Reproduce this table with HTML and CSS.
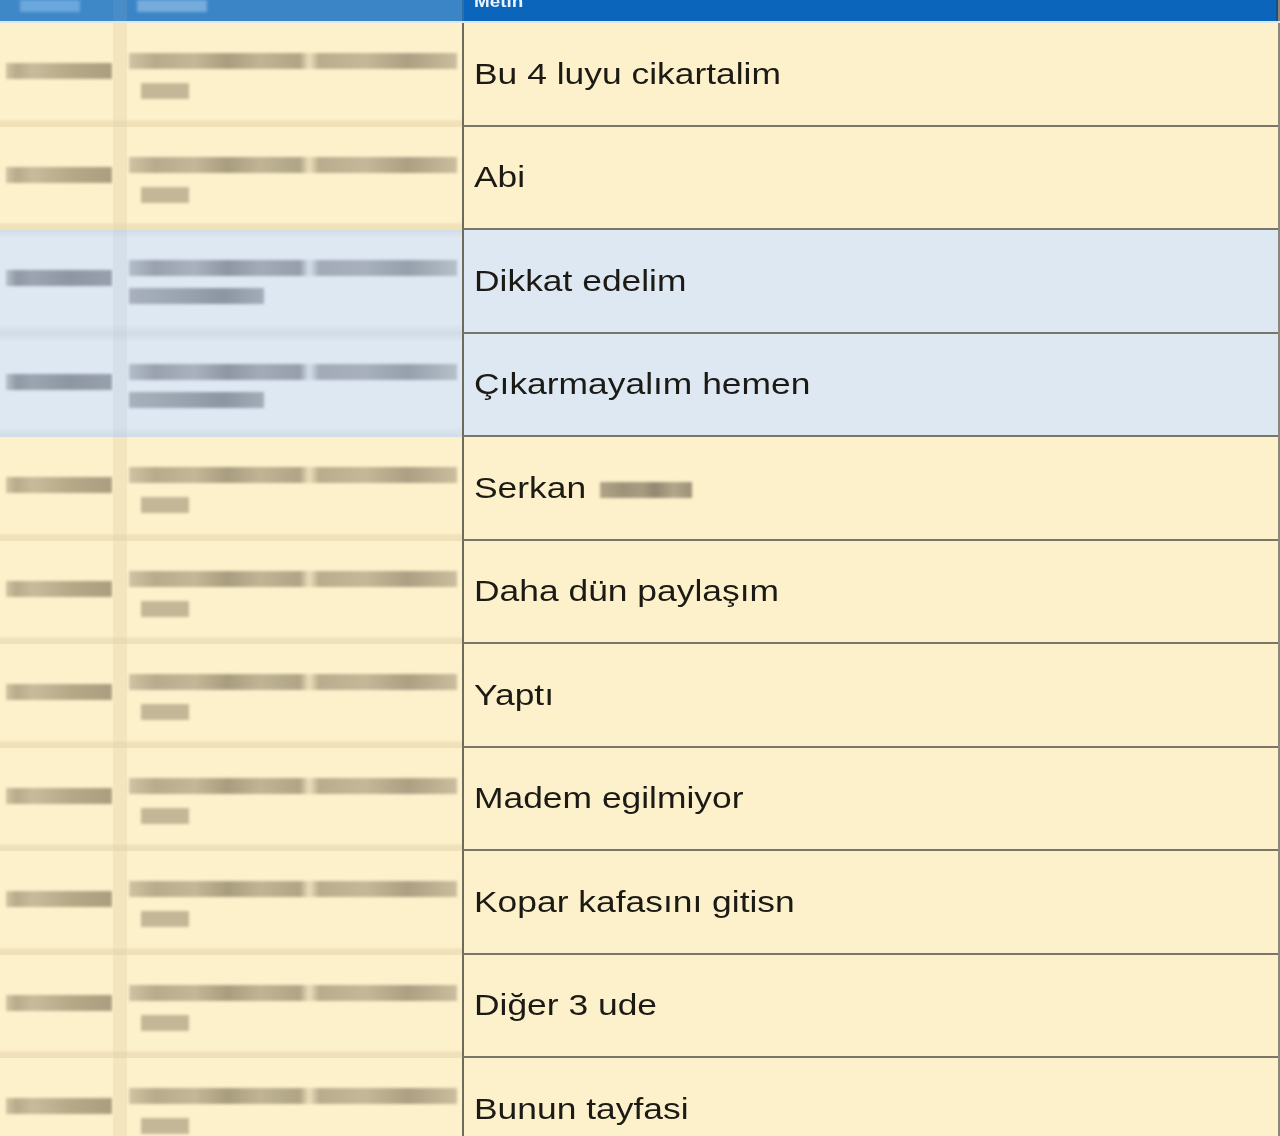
FILE: index.html
```html
<!DOCTYPE html>
<html lang="tr">
<head>
<meta charset="utf-8">
<title>Metin</title>
<link rel="stylesheet" href="styles.css">
</head>
<body>
<div class="sheet">
  <div class="row head">
    <div class="hcell h1"><span class="hblk a"></span></div>
    <div class="hcell hs"></div>
    <div class="hcell h2"><span class="hblk c"></span></div>
    <div class="hcell h3"><span class="htxt">Metin</span></div>
  </div>

  <div class="row">
    <div class="c1"><span class="bar b1"></span></div><div class="sep"></div>
    <div class="c2"><span class="bar l1"></span><span class="bar l2 short"></span></div>
    <div class="c3"><span class="txt">Bu 4 luyu cikartalim</span></div>
  </div>
  <div class="row">
    <div class="c1"><span class="bar b1"></span></div><div class="sep"></div>
    <div class="c2"><span class="bar l1"></span><span class="bar l2 short"></span></div>
    <div class="c3"><span class="txt">Abi</span></div>
  </div>
  <div class="row sel">
    <div class="c1"><span class="bar b1"></span></div><div class="sep"></div>
    <div class="c2"><span class="bar l1"></span><span class="bar l2 long"></span></div>
    <div class="c3"><span class="txt">Dikkat edelim</span></div>
  </div>
  <div class="row sel">
    <div class="c1"><span class="bar b1"></span></div><div class="sep"></div>
    <div class="c2"><span class="bar l1"></span><span class="bar l2 long"></span></div>
    <div class="c3"><span class="txt">Çıkarmayalım hemen</span></div>
  </div>
  <div class="row">
    <div class="c1"><span class="bar b1"></span></div><div class="sep"></div>
    <div class="c2"><span class="bar l1"></span><span class="bar l2 short"></span></div>
    <div class="c3"><span class="txt">Serkan</span><span class="redact"></span></div>
  </div>
  <div class="row">
    <div class="c1"><span class="bar b1"></span></div><div class="sep"></div>
    <div class="c2"><span class="bar l1"></span><span class="bar l2 short"></span></div>
    <div class="c3"><span class="txt">Daha dün paylaşım</span></div>
  </div>
  <div class="row">
    <div class="c1"><span class="bar b1"></span></div><div class="sep"></div>
    <div class="c2"><span class="bar l1"></span><span class="bar l2 short"></span></div>
    <div class="c3"><span class="txt">Yaptı</span></div>
  </div>
  <div class="row">
    <div class="c1"><span class="bar b1"></span></div><div class="sep"></div>
    <div class="c2"><span class="bar l1"></span><span class="bar l2 short"></span></div>
    <div class="c3"><span class="txt">Madem egilmiyor</span></div>
  </div>
  <div class="row">
    <div class="c1"><span class="bar b1"></span></div><div class="sep"></div>
    <div class="c2"><span class="bar l1"></span><span class="bar l2 short"></span></div>
    <div class="c3"><span class="txt">Kopar kafasını gitisn</span></div>
  </div>
  <div class="row">
    <div class="c1"><span class="bar b1"></span></div><div class="sep"></div>
    <div class="c2"><span class="bar l1"></span><span class="bar l2 short"></span></div>
    <div class="c3"><span class="txt">Diğer 3 ude</span></div>
  </div>
  <div class="row">
    <div class="c1"><span class="bar b1"></span></div><div class="sep"></div>
    <div class="c2"><span class="bar l1"></span><span class="bar l2 short"></span></div>
    <div class="c3"><span class="txt">Bunun tayfasi</span></div>
  </div>
</div>
</body>
</html>
```

FILE: styles.css
```css
html, body {
  margin: 0;
  padding: 0;
  height: 1136px;
  overflow: hidden;
  background: #efeadb;
}

.sheet {
  width: 1280px;
  font-family: "Liberation Sans", Arial, sans-serif;
}

.row {
  display: grid;
  grid-template-columns: 113px 14px 335px 816px 2px;
  height: 103.5px;
  box-sizing: border-box;
}

.row.head {
  height: 23px;
  background: #3a83c4;
  border-bottom: 2px solid #d9e7ea;
}

.hcell { position: relative; height: 21px; overflow: hidden; }
.h1 { background: #3f88c8; }
.hs { background: #4a8cc6; }
.h2 { background: #3b85c6; }
.h3 {
  background: #0b66bb;
  border-left: 2px solid #2c6ea8;
  border-right: 2px solid #1c4e86;
  box-sizing: border-box;
  padding-left: 10px;
}
.hblk {
  position: absolute;
  top: 0;
  height: 12px;
  background: #6aa7dc;
  filter: blur(1.5px);
}
.hblk.a { left: 20px; width: 60px; }
.hblk.c { left: 10px; width: 70px; background: #75acdc; }
.htxt {
  display: block;
  width: fit-content;
  color: #e9f3ff;
  font-weight: bold;
  font-size: 16px;
  line-height: 16px;
  margin-top: -6px;
  transform: scaleX(1.18);
  transform-origin: left center;
}

.c1, .sep, .c2 {
  position: relative;
  background:
    linear-gradient(to bottom, transparent 0, transparent 92%, #f0e2ba 95%, #efe0b8 100%),
    #fdf1cc;
}
.sep {
  background:
    linear-gradient(to bottom, transparent 0, transparent 92%, #ebdcb3 95%, #eadab2 100%),
    #f3e5bd;
}
.row.sel .c1, .row.sel .c2 {
  background:
    linear-gradient(to bottom, #d3dde8 0, #dde8f3 8%, #dde8f3 90%, #d2dce6 100%);
}
.row.sel .sep {
  background:
    linear-gradient(to bottom, #cdd7e2 0, #d5e0eb 8%, #d5e0eb 90%, #ccd6e0 100%);
}

.c3 {
  background: #fdf1cc;
  border-left: 2px solid #6e6a5c;
  border-bottom: 2px solid #7a7566;
  box-sizing: border-box;
  display: flex;
  align-items: center;
  padding-left: 10px;
  font-size: 30px;
  color: #1c1a15;
}
.txt {
  display: inline-block;
  transform: scaleX(1.18);
  transform-origin: left center;
  white-space: nowrap;
}
.row.sel .c3 { background: #dde8f3; }
.row::after {
  content: "";
  background: #8b877c;
}

.bar {
  position: absolute;
  display: block;
  filter: blur(1.6px);
}
.b1 {
  left: 6px;
  width: 106px;
  top: 40px;
  height: 16px;
  background: linear-gradient(90deg, #d0c4a3 0, #b8ab8b 10%, #c7bb9b 25%, #b6a988 60%, #aa9e80 100%);
}
.l1 {
  left: 2px;
  width: 328px;
  top: 30px;
  height: 16px;
  background: linear-gradient(90deg, #cfc3a3 0, #b8ab8c 8%, #c3b797 20%, #a99d7f 30%, #c0b495 40%, #b0a486 52%, #ecdfba 55%, #b8ac8d 58%, #c4b898 72%, #ad9f82 85%, #cabe9e 100%);
}
.l2.short {
  left: 14px;
  width: 48px;
  top: 60px;
  height: 16px;
  background: #c4b797;
}
.l2.long {
  left: 2px;
  width: 135px;
  top: 58px;
  height: 16px;
  background: linear-gradient(90deg, #a7b0bc 0, #9aa3b0 40%, #8c96a3 70%, #a3acb8 100%);
}
.row.sel .b1 {
  background: linear-gradient(90deg, #b9c2cd 0, #8f98a4 10%, #9ba4b0 25%, #8d96a2 60%, #97a0ac 100%);
}
.row.sel .l1 {
  background: linear-gradient(90deg, #b3bcc8 0, #98a1ad 8%, #a9b2be 20%, #8d96a2 30%, #a2abb7 40%, #959eaa 52%, #d6e0ec 55%, #a1aab6 58%, #a7b0bc 72%, #96a0ac 85%, #b6bfca 100%);
}

.redact {
  display: inline-block;
  width: 92px;
  height: 16px;
  margin-left: 31px;
  margin-top: 4px;
  background: linear-gradient(90deg, #b0a487 0, #9e9278 25%, #a89c80 45%, #928770 60%, #b3a78a 80%, #9c9177 100%);
  filter: blur(1.5px);
}
```
